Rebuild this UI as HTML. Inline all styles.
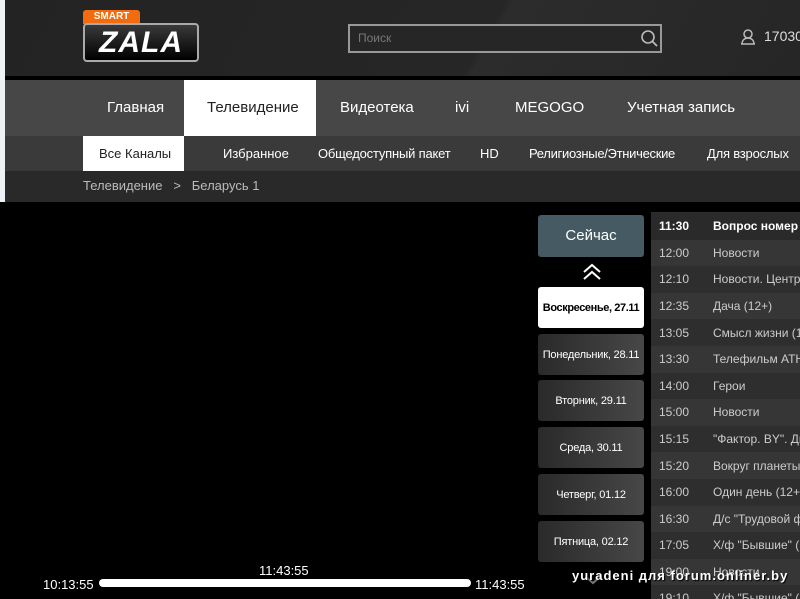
<!DOCTYPE html>
<html><head><meta charset="utf-8"><style>
*{margin:0;padding:0;box-sizing:border-box}
html,body{width:800px;height:599px;overflow:hidden}
body{background:#000;font-family:"Liberation Sans",sans-serif;position:relative}
.a{position:absolute}
.hdr{left:0;top:0;width:800px;height:76px;background:linear-gradient(120deg,#232323 0%,#262626 60%,#2c2c2c 61%,#262626 100%)}
.strip{left:0;top:0;width:5px;height:202px;background:#eef2f7;z-index:5}
.nav{left:0;top:80px;width:800px;height:56px;background:#474747}
.sub{left:0;top:136px;width:800px;height:35px;background:#3a3a3a}
.bc{left:0;top:171px;width:800px;height:31px;background:#292929}
.t{color:#fff;white-space:nowrap}
.day{left:538px;width:106px;height:41px;border-radius:3px;background:linear-gradient(90deg,#2a2a2a,#474747);color:#fff;font-size:11px;display:flex;align-items:center;justify-content:center;white-space:nowrap;overflow:hidden;letter-spacing:-0.2px}
.row{left:651px;width:149px;height:26.6px;font-size:12px;color:#ccc;display:flex;align-items:center;white-space:nowrap;overflow:hidden}
.row span{flex:0 0 62px;padding-left:8px}
</style></head><body>
<div class="a strip"></div>
<div class="a hdr"></div>
<div class="a" style="left:83px;top:10px;width:57px;height:14px;background:#f26b0f;border-radius:3px 3px 0 0;color:#fff;font-size:10px;font-weight:bold;text-align:center;line-height:14px">SMART</div>
<div class="a" style="left:83px;top:23px;width:116px;height:39px;background:linear-gradient(#3a3a3a,#000);border:2px solid #aaa;border-radius:4px;color:#fff;font-size:30px;font-weight:900;font-style:italic;text-align:center;line-height:35px;letter-spacing:1px">ZALA</div>
<div class="a" style="left:348px;top:24px;width:314px;height:29px;border:2px solid #999;background:#262626"></div>
<div class="a" style="left:358px;top:31px;color:#777;font-size:12px">Поиск</div>
<svg class="a" style="left:640px;top:29px" width="20" height="20"><circle cx="8" cy="8" r="6" stroke="#bbb" stroke-width="1.6" fill="none"/><path d="M12.5 12.5L17 17" stroke="#bbb" stroke-width="1.8"/></svg>
<svg class="a" style="left:739px;top:28px" width="18" height="18"><circle cx="9" cy="6" r="4" stroke="#bbb" stroke-width="1.5" fill="none"/><path d="M2 16h14M3 16c0-4 3-6 6-6s6 2 6 6" stroke="#bbb" stroke-width="1.5" fill="none"/></svg>
<div class="a t" style="left:764px;top:28px;font-size:14px;color:#ddd">17030</div>
<div class="a nav"></div>
<div class="a" style="left:184px;top:80px;width:132px;height:56px;background:#fff"></div>
<div class="a t" style="left:107px;top:99px;font-size:15px">Главная</div>
<div class="a t" style="left:207px;top:99px;font-size:15px;color:#222">Телевидение</div>
<div class="a t" style="left:340px;top:99px;font-size:15px">Видеотека</div>
<div class="a t" style="left:455px;top:99px;font-size:15px">ivi</div>
<div class="a t" style="left:515px;top:99px;font-size:15px">MEGOGO</div>
<div class="a t" style="left:627px;top:99px;font-size:15px">Учетная запись</div>
<div class="a sub"></div>
<div class="a" style="left:83px;top:136px;width:101px;height:35px;background:#fff"></div>
<div class="a t" style="left:99px;top:146px;font-size:13px;color:#222">Все Каналы</div>
<div class="a t" style="left:223px;top:146px;font-size:13px">Избранное</div>
<div class="a t" style="left:318px;top:146px;font-size:13px;letter-spacing:-0.2px">Общедоступный пакет</div>
<div class="a t" style="left:480px;top:146px;font-size:13px">HD</div>
<div class="a t" style="left:529px;top:146px;font-size:13px;letter-spacing:-0.3px">Религиозные/Этнические</div>
<div class="a t" style="left:707px;top:146px;font-size:13px;letter-spacing:-0.2px">Для взрослых</div>
<div class="a bc"></div>
<div class="a t" style="left:83px;top:178px;font-size:13px;color:#bbb">Телевидение &nbsp;&nbsp;&gt;&nbsp;&nbsp; Беларусь 1</div>
<div class="a" style="left:538px;top:215px;width:106px;height:42px;background:#455a62;border-radius:3px;color:#fff;font-size:15px;text-align:center;line-height:42px">Сейчас</div>
<svg class="a" style="left:582px;top:263px" width="20" height="18"><path d="M2 9L10 2L18 9M2 16L10 9L18 16" stroke="#fff" stroke-width="2" fill="none"/></svg>
<div class="a day" style="top:287px;background:#fff;color:#000;font-weight:bold;letter-spacing:-0.4px">Воскресенье, 27.11</div>
<div class="a day" style="top:334px">Понедельник, 28.11</div>
<div class="a day" style="top:380px">Вторник, 29.11</div>
<div class="a day" style="top:427px">Среда, 30.11</div>
<div class="a day" style="top:474px">Четверг, 01.12</div>
<div class="a day" style="top:521px">Пятница, 02.12</div>
<svg class="a" style="left:584px;top:574px" width="18" height="12"><path d="M2 3L9 9L16 3" stroke="#777" stroke-width="2" fill="none"/></svg>
<div class="a" style="left:651px;top:212px;width:149px;height:387px;background:#2e2e2e"></div>
<div class="a row" style="top:213px;color:#fff;font-weight:bold;background:#2a2a2a"><span>11:30</span>Вопрос номер о</div>
<div class="a row" style="top:239.6px;background:#363636"><span>12:00</span>Новости</div>
<div class="a row" style="top:266.2px"><span>12:10</span>Новости. Центра</div>
<div class="a row" style="top:292.8px;background:#363636"><span>12:35</span>Дача (12+)</div>
<div class="a row" style="top:319.4px"><span>13:05</span>Смысл жизни (12</div>
<div class="a row" style="top:346px;background:#363636"><span>13:30</span>Телефильм АТН</div>
<div class="a row" style="top:372.6px"><span>14:00</span>Герои</div>
<div class="a row" style="top:399.2px;background:#363636"><span>15:00</span>Новости</div>
<div class="a row" style="top:425.8px"><span>15:15</span>"Фактор. BY". Дне</div>
<div class="a row" style="top:452.4px;background:#363636"><span>15:20</span>Вокруг планеты</div>
<div class="a row" style="top:479px"><span>16:00</span>Один день (12+)</div>
<div class="a row" style="top:505.6px;background:#363636"><span>16:30</span>Д/с "Трудовой фр</div>
<div class="a row" style="top:532.2px"><span>17:05</span>Х/ф "Бывшие" (12</div>
<div class="a row" style="top:558.8px;background:#363636"><span>19:00</span>Новости</div>
<div class="a row" style="top:585.4px;height:14px;align-items:flex-start;padding-top:6px"><span>19:10</span>Х/ф "Бывшие" (12</div>
<div class="a t" style="left:259px;top:563px;font-size:13px">11:43:55</div>
<div class="a t" style="left:43px;top:577px;font-size:13px">10:13:55</div>
<div class="a" style="left:99px;top:579px;width:372px;height:8px;background:#fff;border-radius:4px"></div>
<div class="a t" style="left:475px;top:577px;font-size:13px">11:43:55</div>
<div class="a t" style="left:572px;top:568px;font-size:13px;font-weight:bold;letter-spacing:1px;text-shadow:1px 1px 1px #000">yuradeni для forum.onliner.by</div>
</body></html>
